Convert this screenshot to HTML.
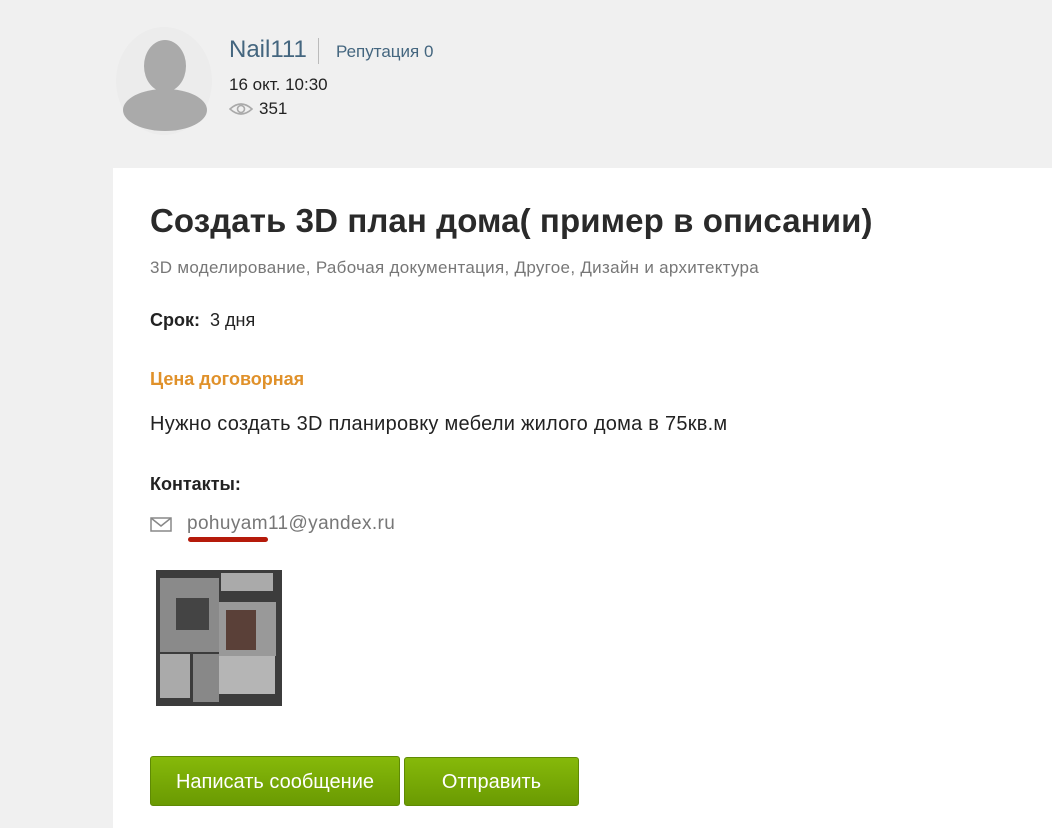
<!DOCTYPE html>
<html><head><meta charset="utf-8"><style>
body{margin:0;width:1052px;height:828px;background:#f0f0f0;font-family:"Liberation Sans","Noto Sans CJK SC",sans-serif;position:relative;overflow:hidden;color:#222}
.a{position:absolute;white-space:nowrap}
.panel{position:absolute;left:113px;top:168px;width:939px;height:660px;background:#fff}
.btn{position:absolute;top:756px;height:50px;border-radius:3px;background:linear-gradient(#86b90a,#6a9a02);border:1px solid #5f8a04;color:#fff;font-size:20px;text-align:center;line-height:50px;box-sizing:border-box}
</style></head><body>
<div class="a" style="left:116px;top:27px;width:96px;height:108px;border-radius:50%;background:#ececec"></div>
<svg class="a" style="left:120px;top:38px" width="92" height="94"><ellipse cx="45" cy="28" rx="21" ry="26" fill="#aaa"/><ellipse cx="45" cy="72" rx="42" ry="21" fill="#aaa"/></svg>
<div class="a" style="left:229px;top:36px;font-size:24px;color:#44667f">Nail111</div>
<div class="a" style="left:318px;top:38px;width:1px;height:26px;background:#bbb"></div>
<div class="a" style="left:336px;top:42px;font-size:17px;color:#44667f">Репутация 0</div>
<div class="a" style="left:229px;top:75px;font-size:17px">16 окт. 10:30</div>
<svg class="a" style="left:229px;top:101px" width="24" height="16"><path d="M1 8 Q12 -2 23 8 Q12 18 1 8Z" fill="none" stroke="#aaa" stroke-width="1.6"/><circle cx="12" cy="8" r="3.5" fill="none" stroke="#aaa" stroke-width="1.6"/></svg>
<div class="a" style="left:259px;top:99px;font-size:17px">351</div>
<div class="panel"></div>
<div class="a" style="left:150px;top:202px;font-size:33px;font-weight:bold;color:#2a2a2a;letter-spacing:0.1px">Создать 3D план дома( пример в описании)</div>
<div class="a" style="left:150px;top:258px;font-size:17px;color:#777;letter-spacing:0.3px">3D моделирование, Рабочая документация, Другое, Дизайн и архитектура</div>
<div class="a" style="left:150px;top:310px;font-size:18px"><b>Срок:</b>&nbsp; 3 дня</div>
<div class="a" style="left:150px;top:369px;font-size:18px;font-weight:bold;color:#e0912a">Цена договорная</div>
<div class="a" style="left:150px;top:413px;font-size:20px;letter-spacing:0.25px">Нужно создать 3D планировку мебели жилого дома в 75кв.м</div>
<div class="a" style="left:150px;top:474px;font-size:18px;font-weight:bold">Контакты:</div>
<svg class="a" style="left:150px;top:517px" width="22" height="15"><rect x="1" y="1" width="20" height="13" fill="none" stroke="#888" stroke-width="1.5"/><path d="M1 1 L11 9 L21 1" fill="none" stroke="#888" stroke-width="1.5"/></svg>
<div class="a" style="left:187px;top:513px;font-size:19px;color:#777;letter-spacing:0.4px">pohuyam11@yandex.ru</div>
<div class="a" style="left:188px;top:537px;width:80px;height:5px;border-radius:3px;background:#b51a0a"></div>
<div class="a" style="left:156px;top:570px;width:126px;height:136px;background:#3c3c3c">
<div class="a" style="left:4px;top:8px;width:59px;height:74px;background:#8a8a8a"></div>
<div class="a" style="left:20px;top:28px;width:33px;height:32px;background:#444"></div>
<div class="a" style="left:65px;top:3px;width:52px;height:18px;background:#aaa"></div>
<div class="a" style="left:63px;top:32px;width:57px;height:54px;background:#999"></div>
<div class="a" style="left:70px;top:40px;width:30px;height:40px;background:#5a4038"></div>
<div class="a" style="left:4px;top:84px;width:30px;height:44px;background:#aaa"></div>
<div class="a" style="left:37px;top:84px;width:26px;height:48px;background:#888"></div>
<div class="a" style="left:63px;top:86px;width:56px;height:38px;background:#b5b5b5"></div>
</div>
<div class="btn" style="left:150px;width:250px">Написать сообщение</div>
<div class="btn" style="left:404px;width:175px;top:757px;height:49px;line-height:48px">Отправить</div>
</body></html>
